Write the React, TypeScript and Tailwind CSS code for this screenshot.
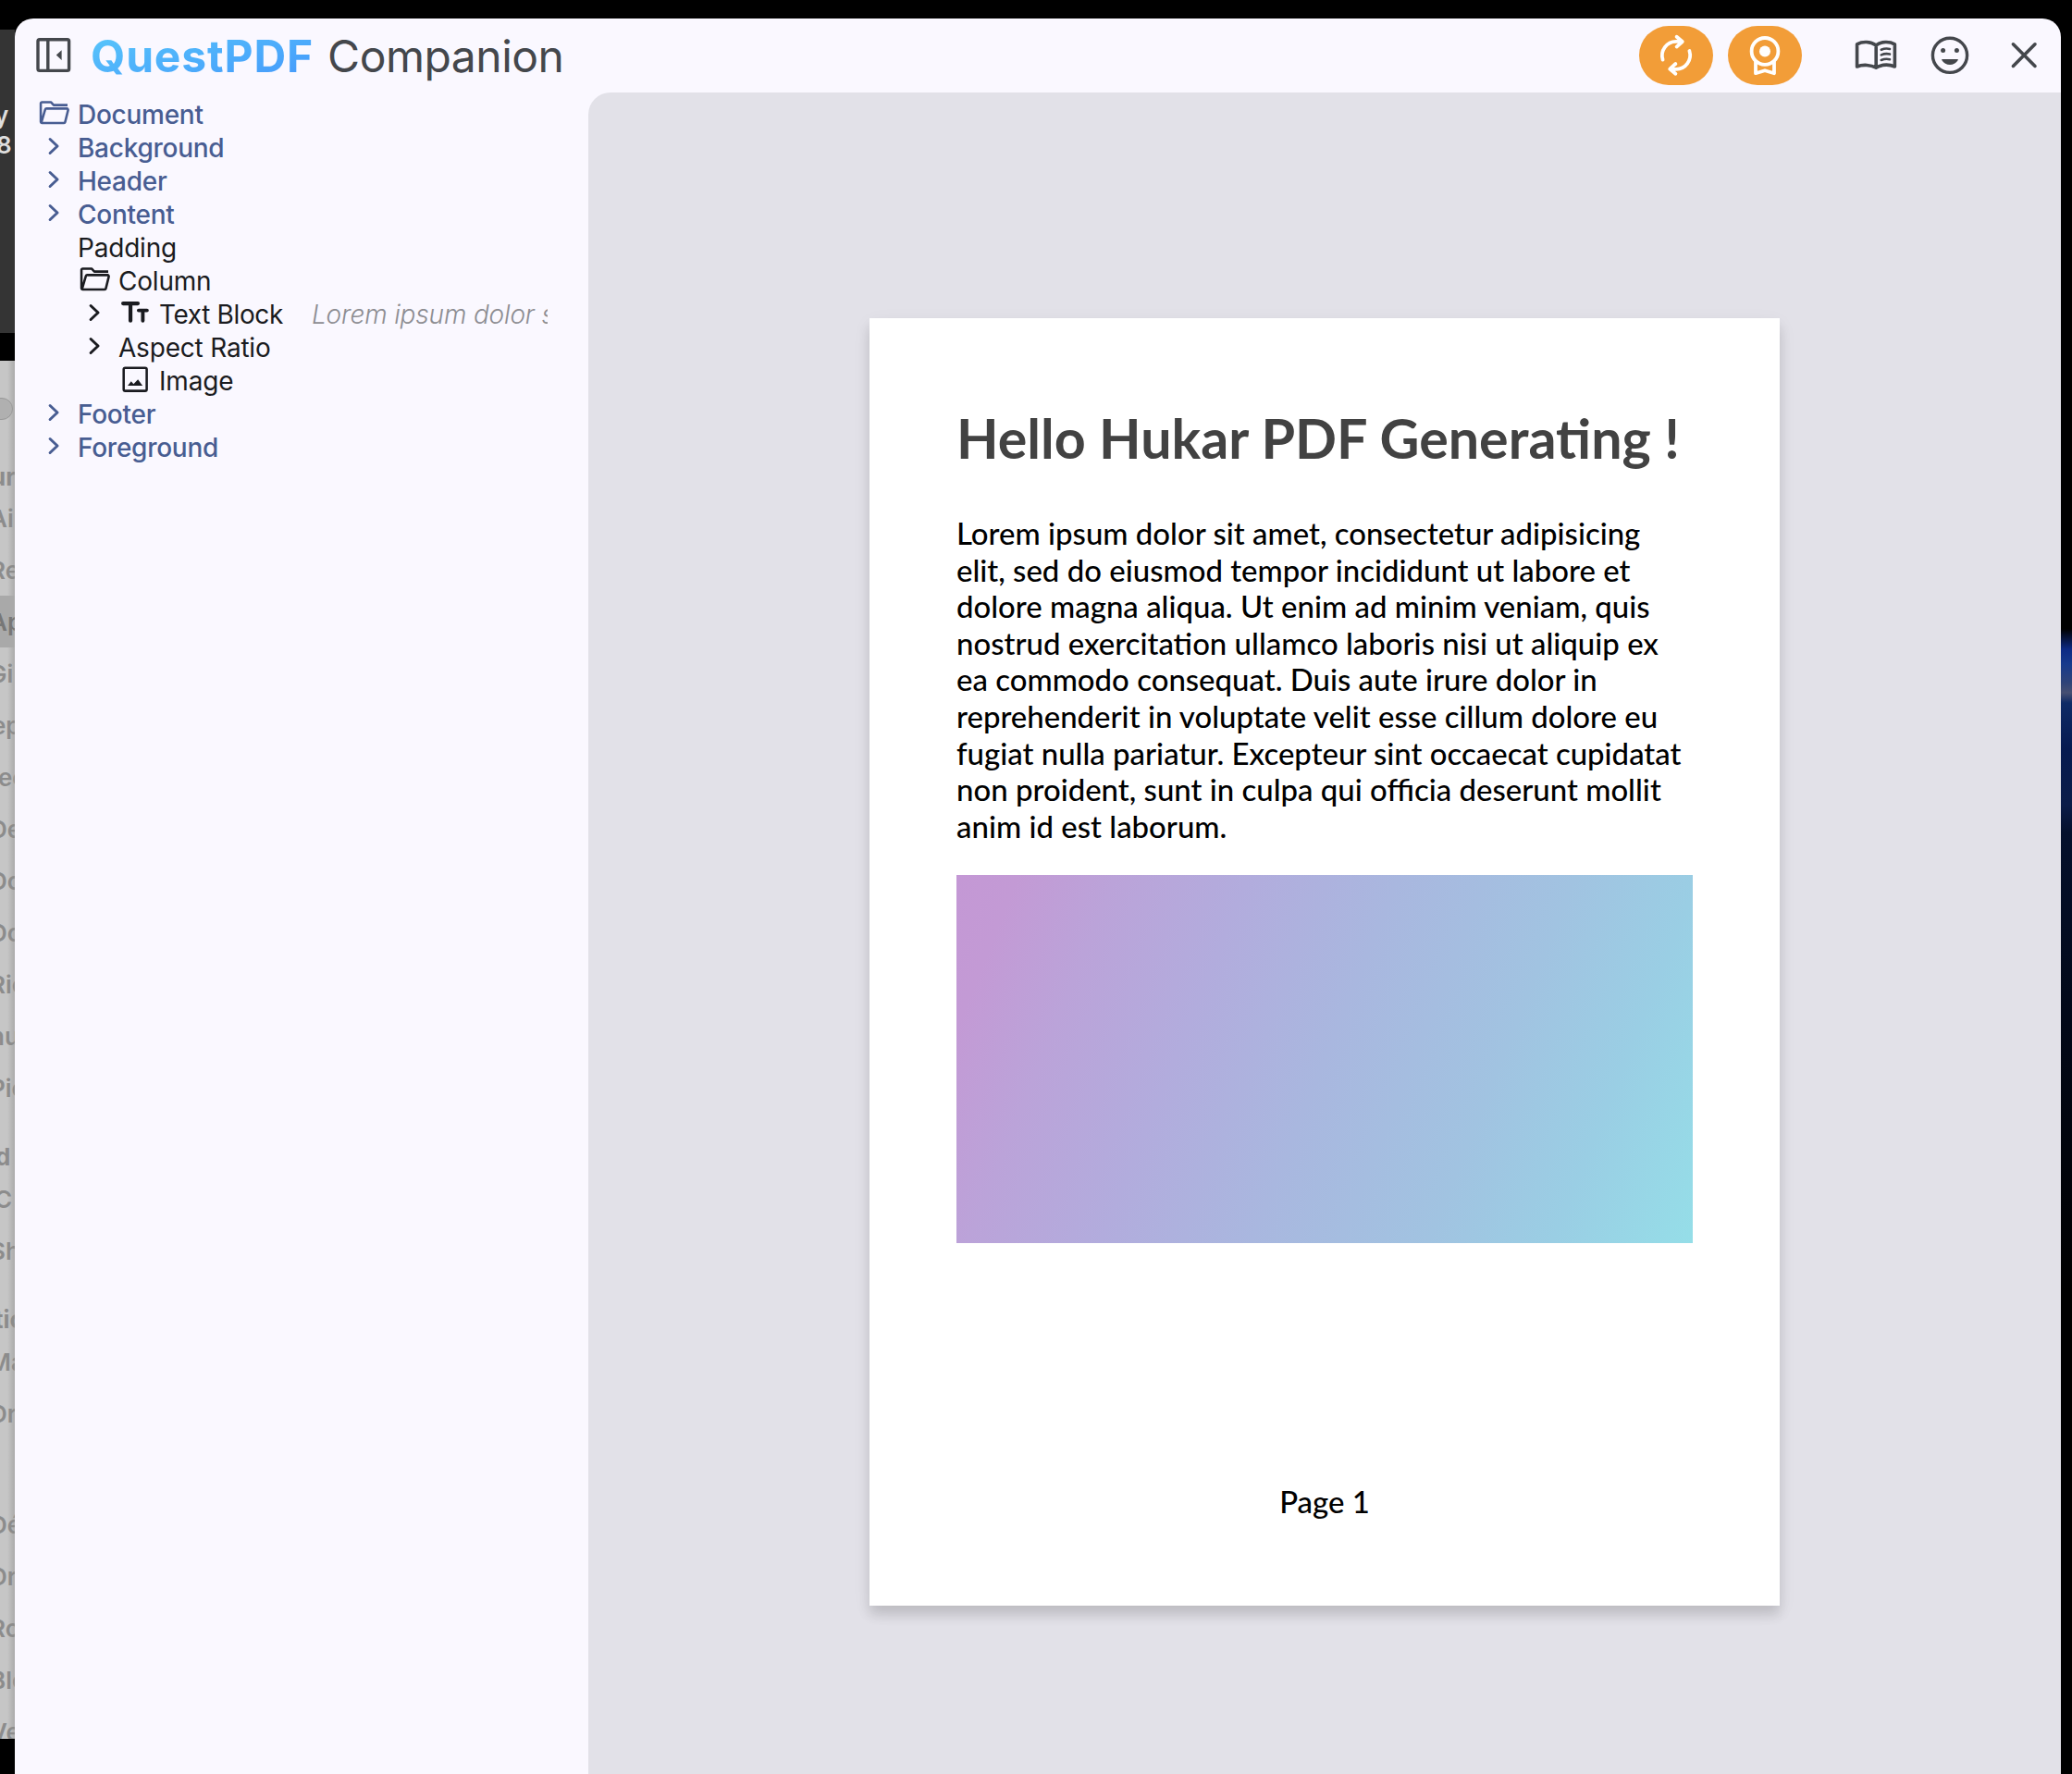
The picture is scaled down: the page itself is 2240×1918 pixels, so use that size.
import React from "react";

type Kind = "folder" | "chevron" | "image" | "text" | "none";

const Svg = ({ children, className }: { children: React.ReactNode; className: string }) => (
  <svg viewBox="0 0 24 24" className={className} fill="none" stroke="currentColor" strokeLinecap="round" strokeLinejoin="round">
    {children}
  </svg>
);

const icons: Record<Kind, React.ReactNode> = {
  folder: (
    <path
      strokeWidth="1.7"
      strokeLinecap="butt"
      d="M22 6.4H12l-2-2.1H3.6a.9.9 0 0 0-.9.9V18.4a.9.9 0 0 0 .9.9H19.4a.9.9 0 0 0 .9-.7l2.1-8.5a1 1 0 0 0-.9-1.2H6.9a1 1 0 0 0-1 .7L3.2 18.8"
    />
  ),
  chevron: <path strokeWidth="2" d="M9.4 7 14.7 12l-5.3 5" />,
  image: (
    <>
      <rect x="3.8" y="3.8" width="16.6" height="16.6" rx="1.1" strokeWidth="1.7" />
      <path fill="currentColor" stroke="none" d="M6.7 16.7 9.2 13.5 10.9 15.5 14.1 12.2 17.4 16.7Z" />
    </>
  ),
  text: (
    <>
      <path strokeWidth="2.8" d="M3.4 5.4H14M8.7 5.6V17.8" />
      <path strokeWidth="2.6" d="M14.6 10.4H20.6M17.6 10.6V17.9" />
    </>
  ),
  none: null,
};

const rows: { label: string; lead: Kind; extra?: Kind; depth: number; accent?: boolean; hint?: string }[] = [
  { label: "Document", lead: "folder", depth: 0, accent: true },
  { label: "Background", lead: "chevron", depth: 0, accent: true },
  { label: "Header", lead: "chevron", depth: 0, accent: true },
  { label: "Content", lead: "chevron", depth: 0, accent: true },
  { label: "Padding", lead: "none", depth: 0 },
  { label: "Column", lead: "folder", depth: 1 },
  { label: "Text Block", lead: "chevron", extra: "text", depth: 1, hint: "Lorem ipsum dolor s" },
  { label: "Aspect Ratio", lead: "chevron", depth: 1 },
  { label: "Image", lead: "none", extra: "image", depth: 1 },
  { label: "Footer", lead: "chevron", depth: 0, accent: true },
  { label: "Foreground", lead: "chevron", depth: 0, accent: true },
];

const paragraph = [
  "Lorem ipsum dolor sit amet, consectetur adipisicing",
  "elit, sed do eiusmod tempor incididunt ut labore et",
  "dolore magna aliqua. Ut enim ad minim veniam, quis",
  "nostrud exercitation ullamco laboris nisi ut aliquip ex",
  "ea commodo consequat. Duis aute irure dolor in",
  "reprehenderit in voluptate velit esse cillum dolore eu",
  "fugiat nulla pariatur. Excepteur sint occaecat cupidatat",
  "non proident, sunt in culpa qui officia deserunt mollit",
  "anim id est laborum.",
];

/* Sidebar of the window that sits behind; only its right edge is visible. */
const behind: { t: string; c: string }[] = [
  { t: "ur", c: "mt-[43px] h-9 -ml-[10px] font-bold" },
  { t: "Ai", c: "-mt-px h-14 -ml-[11px]" },
  { t: "Re", c: "h-14 -ml-[11px]" },
  { t: "Ap", c: "h-14 pr-4 -ml-[11px] bg-[#a9a9a9] text-[#777]" },
  { t: "Gi", c: "h-14 -ml-[12px]" },
  { t: "ep", c: "h-14 -ml-[9px]" },
  { t: "ec", c: "h-14 -ml-[2px]" },
  { t: "De", c: "h-14 -ml-[11px]" },
  { t: "Do", c: "h-14 -ml-[11px]" },
  { t: "Do", c: "h-14 -ml-[11px]" },
  { t: "Ric", c: "h-14 -ml-[11px]" },
  { t: "nu", c: "h-14 -ml-[11px]" },
  { t: "Pic", c: "h-14 -ml-[11px]" },
  { t: "d", c: "mt-7 h-9 -ml-[5px] font-bold" },
  { t: "C", c: "h-14 -ml-[6px]" },
  { t: "Sh", c: "h-14 -ml-[11px]" },
  { t: "tio", c: "mt-7 h-9 -ml-[6px] font-bold" },
  { t: "Ma", c: "h-14 -ml-[12px]" },
  { t: "Dr", c: "h-14 -ml-[11px]" },
  { t: "Dé", c: "mt-16 h-14 -ml-[11px]" },
  { t: "Dr", c: "h-14 -ml-[11px]" },
  { t: "Ro", c: "h-14 -ml-[11px]" },
  { t: "Blo", c: "h-14 -ml-[11px]" },
  { t: "Ve", c: "h-14 -ml-[11px]" },
];

const Row = ({ r }: { r: (typeof rows)[number] }) => (
  <div className={`flex h-9 gap-2 ${r.depth ? "pl-11" : ""} ${r.accent ? "text-[#485d92]" : "text-[#1a1b20]"}`}>
    <Svg className="size-9 shrink-0">{icons[r.lead]}</Svg>
    {r.extra && <Svg className="size-9 shrink-0">{icons[r.extra]}</Svg>}
    <span className={`shrink-0 text-[28px] leading-[41px] whitespace-nowrap ${r.accent ? "font-medium tracking-[-0.27px]" : r.hint ? "tracking-[-0.38px]" : "tracking-[-0.2px]"}`}>{r.label}</span>
    {r.hint && (
      <span className="ml-[23px] min-w-0 flex-1 overflow-hidden text-[28px] leading-[41px] font-light tracking-[-0.16px] whitespace-nowrap text-[#8d8d92] italic">
        {r.hint}
      </span>
    )}
  </div>
);

const Toolbar = () => (
  <div className="ml-auto flex items-center">
    <button className="flex h-16 w-20 items-center justify-center rounded-full bg-[#f29d38] text-white">
      <Svg className="size-12">
        <g strokeWidth="1.9">
          <path d="M4.8 14.3A7.6 7.6 0 0 1 12 4.4H15M12.3 1.9 15.4 4.5 12.3 7.3" />
          <path d="M19.2 9.5A7.6 7.6 0 0 1 12 19.4H9M11.7 21.9 8.6 19.3 11.7 16.5" />
        </g>
      </Svg>
    </button>
    <button className="ml-4 flex h-16 w-20 items-center justify-center rounded-full bg-[#f29d38] text-white">
      <Svg className="size-12">
        <circle cx="12" cy="9.7" r="7.2" strokeWidth="1.9" />
        <circle cx="12" cy="9.8" r="3" fill="currentColor" stroke="none" />
        <path strokeWidth="1.9" d="M7 15.6v6l5-1.5 5 1.5v-6" />
      </Svg>
    </button>
    <Svg className="ml-14 size-12">
      <path strokeWidth="1.8" d="M1.8 5.9C4.8 4.3 9 4.3 12.1 6.5C15 4.3 19.2 4.3 22.2 5.9V18C19 16.7 15 17 12.1 18.6C9.2 17 5 16.7 1.8 18ZM12.1 6.5V18.5" />
      <path strokeWidth="1.3" d="M14.9 8.9Q17.2 7.9 19.5 8.5M14.9 11.7Q17.2 10.7 19.5 11.3M14.9 14.5Q17.2 13.5 19.5 14.1" />
    </Svg>
    <Svg className="ml-8 size-12">
      <circle cx="12" cy="11.9" r="9.3" strokeWidth="1.7" />
      <circle cx="8.3" cy="9.2" r="1.25" fill="currentColor" stroke="none" />
      <circle cx="15.7" cy="9.2" r="1.25" fill="currentColor" stroke="none" />
      <path fill="currentColor" stroke="none" d="M7.9 14H16.1Q16.7 14 16.3 14.6A5.1 5.1 0 0 1 7.7 14.6Q7.3 14 7.9 14Z" />
    </Svg>
    <Svg className="ml-8 size-12">
      <path strokeWidth="1.8" d="M6.2 5.9 18 17.7M18 5.9 6.2 17.7" />
    </Svg>
  </div>
);

export default function App() {
  return (
    <div className="flex h-[1918px] w-[2240px] overflow-hidden bg-black font-['Inter',sans-serif]">
      <div className="flex h-full w-4 shrink-0 flex-col overflow-hidden pt-8">
        <div className="flex h-[328px] shrink-0 flex-col bg-[#343434] pt-[77px] text-[26px] leading-[32px] font-semibold text-[#dedede]">
          <span className="-ml-[6px]">y</span>
          <span className="-ml-[4px]">8</span>
        </div>
        <div className="mt-[30px] flex h-[1490px] shrink-0 flex-col overflow-hidden bg-linear-to-r from-[#c6c6c6] from-50% to-[#aaaaaa] pt-10 text-[26px] font-semibold text-[#8c8c8c]">
          <div className="-ml-5 h-6 w-[34px] shrink-0 rounded-full border border-[#999] bg-[#b0b0b0]" />
          {behind.map((b, i) => (
            <div key={i} className={`flex shrink-0 items-center whitespace-nowrap ${b.c}`}>{b.t}</div>
          ))}
        </div>
      </div>
      <div className="mt-5 flex h-[1898px] w-[2212px] shrink-0 flex-col overflow-hidden rounded-t-[20px] bg-[#faf8ff]">
        <header className="flex h-20 shrink-0 items-center pr-4 pl-[18px] text-[#44474c]">
          <Svg className="size-12">
            <rect x="3.5" y="3.4" width="16.8" height="16.8" rx=".9" strokeWidth="1.7" />
            <path strokeWidth="1.7" d="M8.9 3.5v16.6" />
            <path fill="currentColor" stroke="none" d="M16.3 9.1v5.4l-2.9-2.7Z" />
          </Svg>
          <h1 className="ml-4 flex gap-[15px] pt-[2px] text-[48px] leading-[60px] whitespace-nowrap">
            <span className="bg-linear-to-br from-[#59c8fa] to-[#4596fb] bg-clip-text font-bold tracking-[0.85px] text-transparent">QuestPDF</span>
            <span className="tracking-[-0.5px]">Companion</span>
          </h1>
          <Toolbar />
        </header>
        <div className="flex min-h-0 flex-1">
          <aside className="w-[620px] shrink-0 pt-1 pr-11 pl-6">
            {rows.map((r) => (
              <Row key={r.label} r={r} />
            ))}
          </aside>
          <main className="flex-1 rounded-tl-[24px] bg-[#e2e1e8] pt-[244px] pl-[304px]">
            <article className="flex h-[1392px] w-[984px] flex-col bg-white px-[94px] font-['Lato',sans-serif] shadow-[0_10px_12px_rgba(0,0,0,0.12),0_6px_20px_rgba(0,0,0,0.06)]">
              <h2 className="mt-[85px] text-[59.2px] leading-[90px] font-bold whitespace-nowrap text-[#424242]">Hello Hukar PDF Generating !</h2>
              <div className="mt-[38px] text-[32.95px] leading-[39.6px] font-medium text-black">
                {paragraph.map((p) => (
                  <p key={p} className="whitespace-nowrap">{p}</p>
                ))}
              </div>
              <div className="mt-[33px] h-[398px] w-[796px] shrink-0 bg-[linear-gradient(112deg,#c498d5_0%,#c39ad5_7%,#bba3d9_18%,#b2acdd_33%,#a9b7df_50%,#a1c3e1_70%,#9acee4_84%,#95dee8_100%)]" />
              <p className="mt-[260px] text-center text-[32.95px] leading-[39.6px] font-medium text-black">Page 1</p>
            </article>
          </main>
        </div>
      </div>
      <div className="w-3 shrink-0 bg-[linear-gradient(180deg,#000_0px,#000_680px,#0d2a84_702px,#173a8c_718px,#2f4378_738px,#464f72_749px,#0e2a66_760px,#061a50_810px,#0b1c48_870px,#04102c_900px,#020818_1100px,#000_1400px)]" />
    </div>
  );
}
